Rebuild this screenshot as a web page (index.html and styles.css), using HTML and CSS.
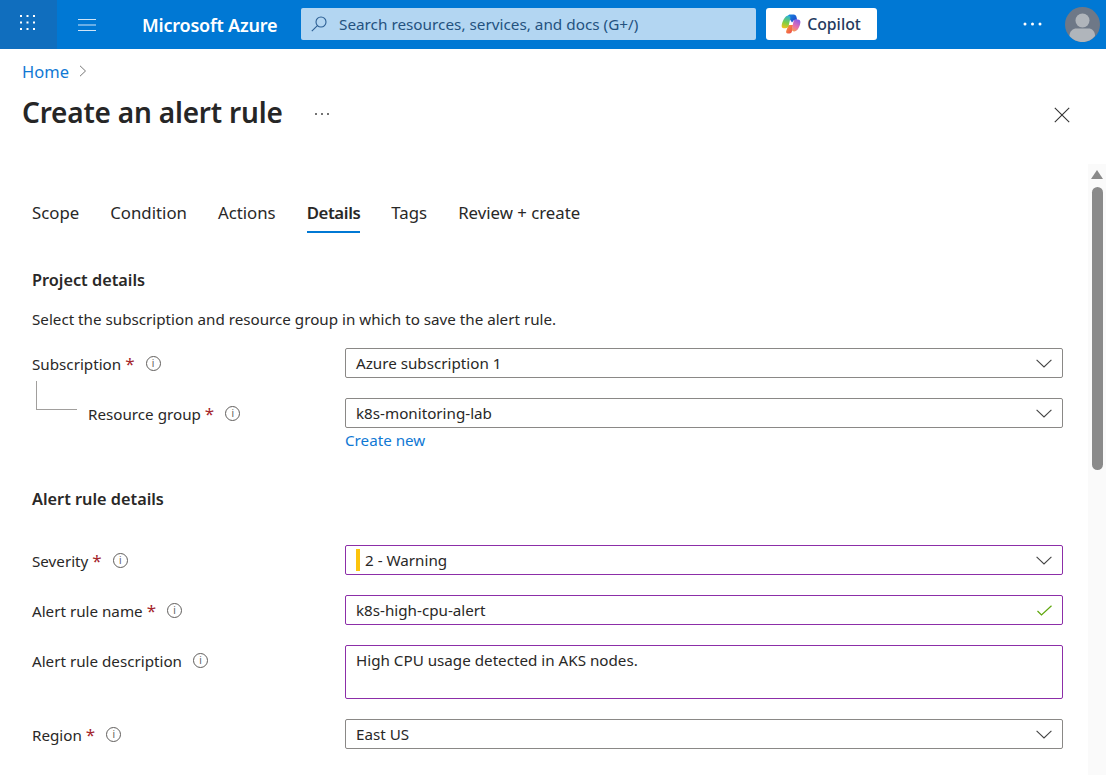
FILE: index.html
```html
<!DOCTYPE html>
<html>
<head>
    <meta charset="UTF-8">
    <title>Create an alert rule - Microsoft Azure</title>
    <link rel="stylesheet" href="styles.css">
</head>
<body>
    <header class="topbar">
        <div class="waffle">
            <svg width="15" height="15" viewBox="0 0 15 15" fill="#fff">
                <rect x="0" y="0" width="2" height="2"/><rect x="6.500" y="0" width="2" height="2"/><rect x="13" y="0" width="2" height="2"/>
                <rect x="0" y="6.500" width="2" height="2"/><rect x="6.500" y="6.500" width="2" height="2"/><rect x="13" y="6.500" width="2" height="2"/>
                <rect x="0" y="13" width="2" height="2"/><rect x="6.500" y="13" width="2" height="2"/><rect x="13" y="13" width="2" height="2"/>
            </svg>
        </div>
        <div class="hamburger">
            <svg width="18" height="14" viewBox="0 0 18 14" stroke="#cfe4f7" stroke-width="1.200">
                <path d="M0 1.500h18M0 7h18M0 12.500h18"/>
            </svg>
        </div>
        <div class="brand">Microsoft Azure</div>
        <div class="search">
            <svg width="16" height="16" viewBox="0 0 16 16" fill="none" stroke="#2c5f94" stroke-width="1.100">
                <circle cx="10" cy="6" r="5"/>
                <path d="M6.400 9.600L0.800 15.200"/>
            </svg>
            <span>Search resources, services, and docs (G+/)</span>
        </div>
        <div class="copilot">
            <svg width="20" height="20" viewBox="0 0 20 20">
                <defs>
                    <linearGradient id="cpA" x1="0" y1="0" x2="1" y2="1">
                        <stop offset="0" stop-color="#1a8ae6"/>
                        <stop offset="1" stop-color="#1b3fc4"/>
                    </linearGradient>
                    <linearGradient id="cpB" x1="0.500" y1="0" x2="0.300" y2="1">
                        <stop offset="0" stop-color="#2fb5d0"/>
                        <stop offset="0.550" stop-color="#7fcf45"/>
                        <stop offset="1" stop-color="#f5c21c"/>
                    </linearGradient>
                    <linearGradient id="cpC" x1="0.700" y1="0" x2="0.300" y2="1">
                        <stop offset="0" stop-color="#8a5be8"/>
                        <stop offset="0.600" stop-color="#e56fb0"/>
                        <stop offset="1" stop-color="#f59a5a"/>
                    </linearGradient>
                    <linearGradient id="cpD" x1="0" y1="0" x2="1" y2="1">
                        <stop offset="0" stop-color="#f7a23b"/>
                        <stop offset="1" stop-color="#ee3f4e"/>
                    </linearGradient>
                </defs>
                <path fill="url(#cpD)" d="M7.500 11h4.500l-1 6c-.2 1.300-.9 2.600-2.500 2.600H6.800c-1.500 0-2-1.500-1.500-2.800z"/>
                <path fill="url(#cpA)" d="M6.500 2.500C7 1 8 .4 9.500.4h3.200c1.500 0 2.500 1.200 2.800 2.600l.6 2.700-3.100.4L11 8.500 9 5.500z"/>
                <path fill="url(#cpB)" d="M5.200 2.200C6.800 1 9.800 1 9.400 4.200L7.700 11.500c-.4 1.800-1.500 2.800-3.300 2.800H2.800C1.300 14.300.4 13 .7 11.300 1.200 8 3 3.800 5.200 2.200z"/>
                <path fill="url(#cpC)" d="M14.500 5.500h2.300c1.700 0 2.800 1.200 2.600 3-.4 3.200-2 7-4.200 8.300-2.200 1.400-4.700.5-4.300-2L12.500 7.500c.3-1.200 1-2 2-2z"/>
            </svg>
            <span>Copilot</span>
        </div>
        <svg class="topbar-more" width="19" height="4" viewBox="0 0 19 4" fill="#fff">
            <circle cx="2" cy="2" r="1.500"/><circle cx="9.500" cy="2" r="1.500"/><circle cx="17" cy="2" r="1.500"/>
        </svg>
        <div class="avatar">
            <svg width="35" height="35" viewBox="0 0 35 35">
                <circle cx="17.500" cy="17.500" r="17.500" fill="#6e7887"/>
                <circle cx="17.500" cy="13.500" r="7" fill="#b0b5bb"/>
                <path fill="#b0b5bb" d="M4.500 29c0-5 3.500-7.500 7-7.500h12c3.500 0 6.500 2.500 6.500 7.500-3 3.700-7.500 6-12.500 6s-10-2.300-13-6z"/>
            </svg>
        </div>
    </header>

    <div class="page-head">
        <nav class="breadcrumb">
            <a>Home</a>
            <svg width="8" height="12" viewBox="0 0 8 12" fill="none" stroke="#777" stroke-width="1"><path d="M1 .8L6.500 6 1 11.200"/></svg>
        </nav>
        <div class="title-row">
            <h1>Create an alert rule</h1>
            <svg class="title-more" width="14" height="2" viewBox="0 0 14 2" fill="#444">
                <circle cx="1" cy="1" r="1"/><circle cx="7" cy="1" r="1"/><circle cx="13" cy="1" r="1"/>
            </svg>
            <svg class="close" width="16" height="16" viewBox="0 0 16 16" fill="none" stroke="#333" stroke-width="1.100"><path d="M.8.800l14.400 14.400M15.200.800L.8 15.200"/></svg>
        </div>
    </div>

    <div class="blade">
        <main class="content">
            <div class="tabs">
                <span>Scope</span>
                <span>Condition</span>
                <span>Actions</span>
                <span class="active">Details</span>
                <span>Tags</span>
                <span>Review + create</span>
            </div>

            <h2 class="first">Project details</h2>
            <p class="intro">Select the subscription and resource group in which to save the alert rule.</p>

            <div class="row">
                <label>Subscription <b>*</b><i class="info">i</i></label>
                <div class="field">
                    <span>Azure subscription 1</span>
                    <svg class="chev" width="16" height="9" viewBox="0 0 16 9" fill="none" stroke="#444" stroke-width="1.100"><path d="M.6.800L8 8l7.400-7.200"/></svg>
                </div>
            </div>
            <div class="row">
                <label><span class="tree"></span>Resource group <b>*</b><i class="info">i</i></label>
                <div class="field">
                    <span>k8s-monitoring-lab</span>
                    <svg class="chev" width="16" height="9" viewBox="0 0 16 9" fill="none" stroke="#444" stroke-width="1.100"><path d="M.6.800L8 8l7.400-7.200"/></svg>
                </div>
            </div>
            <a class="create-new">Create new</a>

            <h2 class="second">Alert rule details</h2>

            <div class="row">
                <label>Severity <b>*</b><i class="info">i</i></label>
                <div class="field edited">
                    <span class="sev-bar"></span>
                    <span>2 - Warning</span>
                    <svg class="chev" width="16" height="9" viewBox="0 0 16 9" fill="none" stroke="#444" stroke-width="1.100"><path d="M.6.800L8 8l7.400-7.200"/></svg>
                </div>
            </div>
            <div class="row">
                <label>Alert rule name <b>*</b><i class="info">i</i></label>
                <div class="field edited">
                    <span>k8s-high-cpu-alert</span>
                    <svg class="check" width="15" height="11" viewBox="0 0 15 11" fill="none" stroke="#5fa70c" stroke-width="1.200"><path d="M.5 6l4 4L14.500.7"/></svg>
                </div>
            </div>
            <div class="row">
                <label>Alert rule description<i class="info">i</i></label>
                <div class="field edited area">
                    <span>High CPU usage detected in AKS nodes.</span>
                </div>
            </div>
            <div class="row">
                <label>Region <b>*</b><i class="info">i</i></label>
                <div class="field">
                    <span>East US</span>
                    <svg class="chev" width="16" height="9" viewBox="0 0 16 9" fill="none" stroke="#444" stroke-width="1.100"><path d="M.6.800L8 8l7.400-7.200"/></svg>
                </div>
            </div>
        </main>
        <aside class="scrollbar">
            <span class="arrow"></span>
            <span class="thumb"></span>
        </aside>
    </div>
</body>
</html>
```

FILE: styles.css
```css
* {
    box-sizing: border-box;
}

html, body {
    height: 100%;
}

body {
    margin: 0;
    background: #fff;
    color: #292827;
    font-family: "Noto Sans", "Open Sans", sans-serif;
    font-size: 15.200px;
    overflow: hidden;
    display: flex;
    flex-direction: column;
}

/* top bar */
.topbar {
    height: 49px;
    flex: none;
    background: #0078d4;
    display: flex;
    align-items: center;
    color: #fff;
}

.waffle {
    width: 57px;
    height: 49px;
    background: #106ebe;
    display: flex;
    align-items: center;
    justify-content: center;
    padding: 0 2px 5px 0;
}

.hamburger {
    width: 60px;
    display: flex;
    justify-content: center;
}

.brand {
    width: 184px;
    padding-left: 25px;
    font-size: 18px;
    font-weight: 600;
    letter-spacing: -0.2px;
}

.search {
    width: 455px;
    height: 32px;
    margin-top: -1px;
    background: #b3d6f2;
    border-radius: 2px;
    display: flex;
    align-items: center;
    gap: 12px;
    padding-left: 10px;
    color: #24527f;
    font-size: 15.300px;
    white-space: nowrap;
}

.copilot {
    width: 111px;
    height: 32px;
    margin: -1px 0 0 10px;
    padding-right: 1px;
    background: #fff;
    border-radius: 3px;
    display: flex;
    align-items: center;
    justify-content: center;
    gap: 6px;
    color: #243a5e;
    font-size: 15.800px;
    font-weight: 500;
}

.topbar-more {
    margin: -2px 23px 0 auto;
}

.avatar {
    width: 35px;
    height: 35px;
    margin-right: 6px;
    margin-top: -1px;
}

/* title */
.page-head {
    flex: none;
    padding: 10px 36px 0 22px;
}

.breadcrumb {
    height: 24px;
    display: flex;
    align-items: center;
    gap: 10px;
    font-size: 16.500px;
}

.breadcrumb a, .create-new {
    color: #0f78d4;
}

.title-row {
    display: flex;
    align-items: center;
    height: 44px;
    margin-top: 7px;
}

h1 {
    margin: 0;
    font-size: 28px;
    font-weight: 600;
    letter-spacing: -0.2px;
    color: #262626;
}

.title-more {
    margin: 4px 0 0 32px;
}

.close {
    margin: 5px 0 0 auto;
}

/* body */
.blade {
    flex: 1;
    display: flex;
    min-height: 0;
    padding-top: 30px;
}

.content {
    width: 1063px;
    flex: none;
    padding: 33px 0 0 32px;
}

.tabs {
    display: flex;
    gap: 31px;
    height: 34px;
    font-size: 16.800px;
    line-height: 32px;
    white-space: nowrap;
}

.tabs span {
    height: 36px;
}

.tabs .active {
    font-weight: 600;
    letter-spacing: -0.4px;
    border-bottom: 2px solid #0078d4;
}

h2 {
    margin: 0;
    font-size: 16.300px;
    font-weight: 600;
    line-height: 22px;
}

h2.first {
    margin-top: 38px;
}

h2.second {
    margin-top: 38px;
    margin-bottom: 35px;
}

.intro {
    margin: 18px 0 19px;
    line-height: 20px;
}

.row {
    display: grid;
    grid-template-columns: 313px 718px;
    margin-bottom: 20px;
}

label {
    display: flex;
    align-items: flex-start;
    height: 30px;
    padding-top: 1px;
    line-height: 30px;
    white-space: nowrap;
}

label b {
    color: #a4262c;
    font-size: 17px;
    font-weight: 400;
    margin-left: 4px;
}

.info {
    width: 15px;
    height: 15px;
    margin: 7px 0 0 11px;
    border: 1px solid #605e5c;
    border-radius: 50%;
    color: #605e5c;
    font-size: 10px;
    font-style: normal;
    line-height: 13px;
    text-align: center;
}

.tree {
    width: 41px;
    height: 29px;
    margin: -18px 11px 0 4px;
    border-left: 1px solid #a19f9d;
    border-bottom: 1px solid #a19f9d;
}

.field {
    height: 30px;
    border: 1px solid #8a8886;
    border-radius: 2px;
    display: flex;
    align-items: center;
    padding: 0 10px;
    white-space: nowrap;
}

.field.edited {
    border-color: #8c2ea8;
}

.field.area {
    height: 54px;
    align-items: flex-start;
    padding-top: 4px;
}

.chev, .check {
    margin-left: auto;
}

.sev-bar {
    width: 4px;
    height: 22px;
    background: #fcc40d;
    margin-right: 5px;
}

.create-new {
    display: block;
    margin: -18px 0 0 313px;
    line-height: 20px;
}

/* scrollbar */
.scrollbar {
    margin-left: 25px;
    width: 18px;
    background: #fafafa;
    display: flex;
    flex-direction: column;
    align-items: center;
    padding-top: 6px;
}

.arrow {
    width: 0;
    height: 0;
    border-left: 6px solid transparent;
    border-right: 6px solid transparent;
    border-bottom: 9px solid #8a8a8a;
}

.thumb {
    width: 11px;
    height: 283px;
    margin-top: 8px;
    background: #8a8a8a;
    border-radius: 6px;
}
```
